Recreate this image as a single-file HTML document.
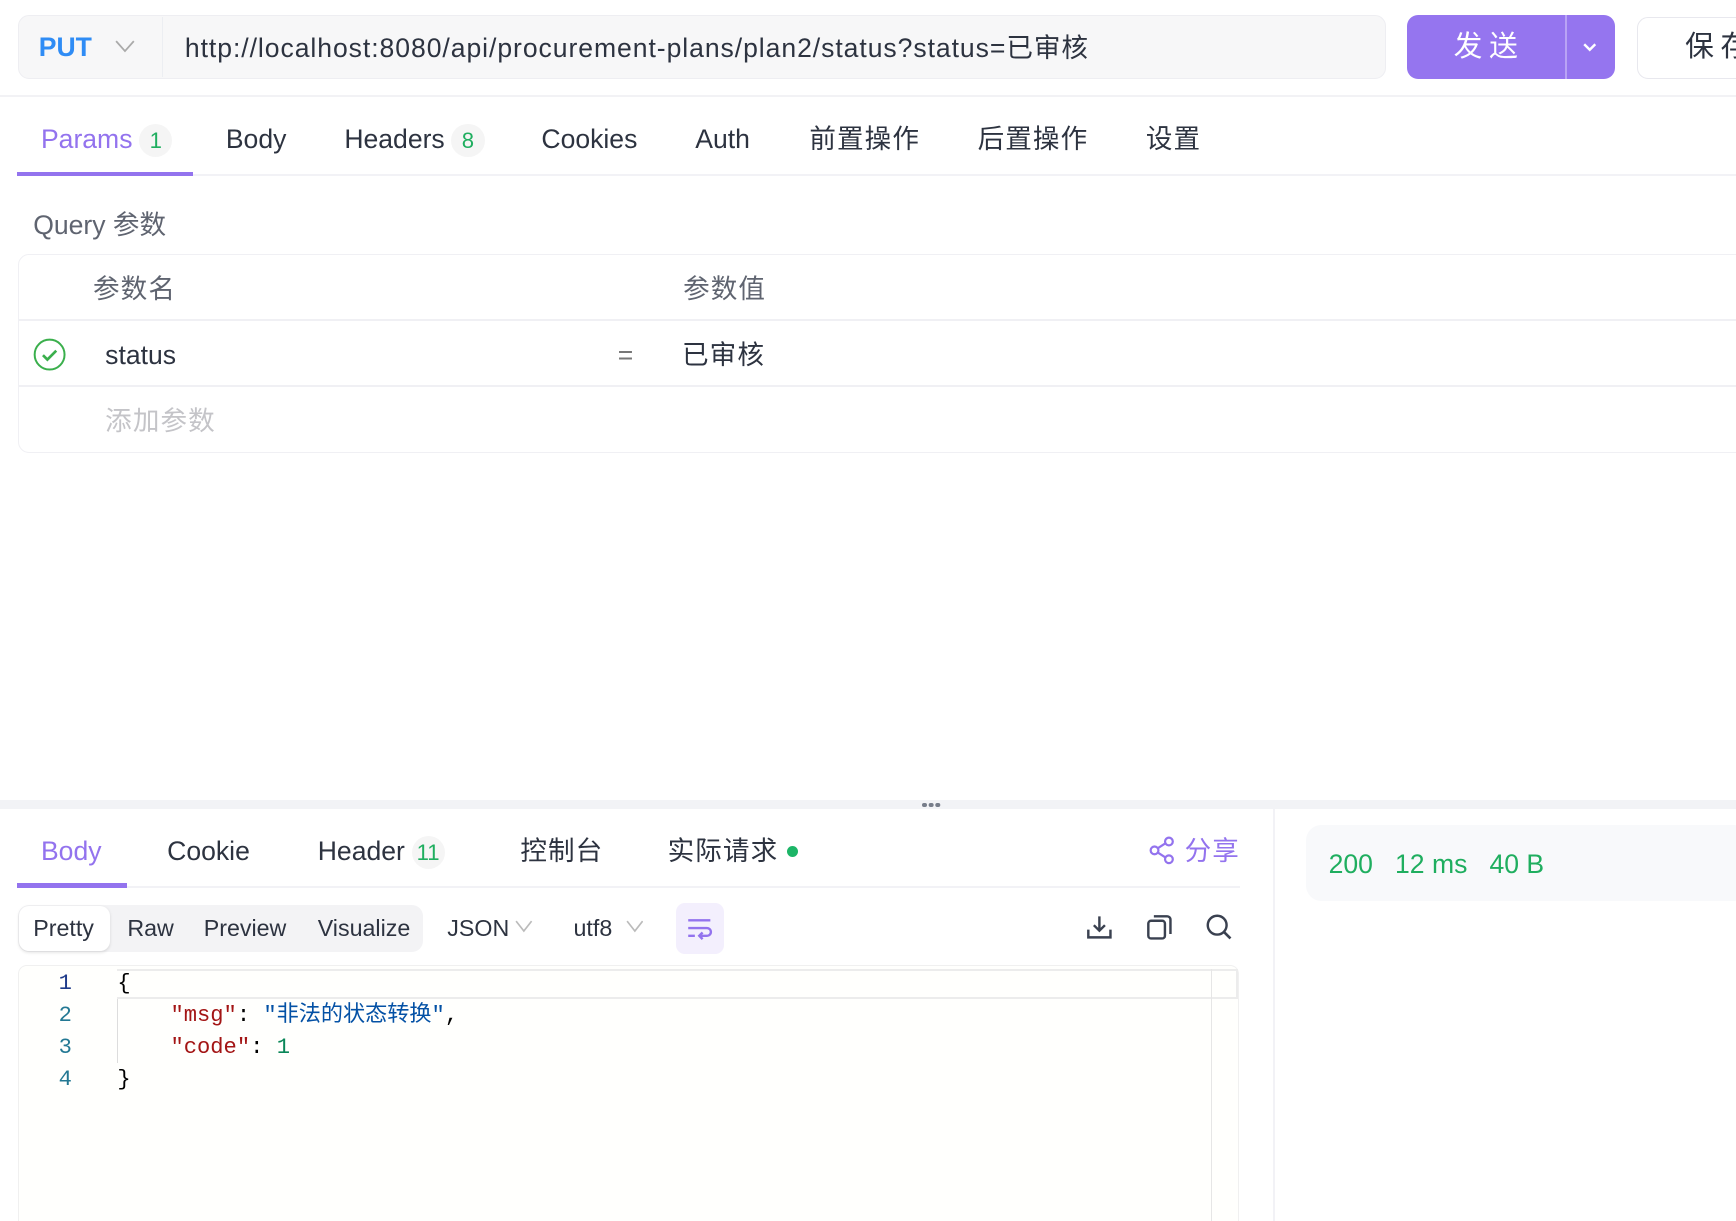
<!DOCTYPE html>
<html><head><meta charset="utf-8">
<style>
*{box-sizing:border-box;margin:0;padding:0}
html,body{width:1736px;height:1221px;overflow:hidden;background:#fff}
#root{zoom:1.10714;width:1568px;height:1103px;position:relative;font-family:"Liberation Sans","Noto Sans CJK SC",sans-serif;color:#2d3340;font-size:24px}
.a{position:absolute;white-space:nowrap}
.badge{display:inline-block;width:30px;height:30px;border-radius:15px;background:#f5f5f5;color:#1fae5f;font-size:20px;line-height:30px;text-align:center;margin-left:6px;vertical-align:middle}
.mono{font-family:"Liberation Mono","Noto Sans CJK SC",monospace;font-size:20px;white-space:pre}
</style></head><body><div id="root">
<div class="a" style="left:16px;top:14px;width:1236px;height:57px;background:#f7f7f8;border:1px solid #eeeef2;border-radius:10px"></div>
<div class="a" style="left:146px;top:15px;width:1px;height:55px;background:#eceef2"></div>
<div class="a" style="left:35px;top:28px;font-weight:bold;color:#2f8cf5;font-size:24px;line-height:30px">PUT</div>
<svg class="a" style="left:104px;top:36px" width="18" height="12" viewBox="0 0 18 12"><path d="M1 1l8 9 8-9" fill="none" stroke="#aaa" stroke-width="1.6"/></svg>
<div class="a" style="left:167px;top:29px;line-height:30px;color:#2d3340;letter-spacing:0.85px">http://localhost:8080/api/procurement-plans/plan2/status?status=已审核</div>
<div class="a" style="left:1271px;top:14px;width:188px;height:57px;background:#9575ef;border-radius:10px"></div>
<div class="a" style="left:1414px;top:14px;width:1px;height:57px;background:#b9a3f5"></div>
<div class="a" style="left:1313px;top:27px;color:#fff;font-size:26px;letter-spacing:6px;line-height:32px">发送</div>
<svg class="a" style="left:1429px;top:38px" width="14" height="9" viewBox="0 0 14 9"><path d="M2 2l5 5 5-5" fill="none" stroke="#fff" stroke-width="2.2"/></svg>
<div class="a" style="left:1479px;top:15px;width:120px;height:56px;border:1.5px solid #e8e8ee;border-radius:10px;background:#fff"></div>
<div class="a" style="left:1522px;top:27px;font-size:26px;letter-spacing:6px;line-height:32px">保存</div>
<div class="a" style="left:0;top:86px;width:1568px;height:2px;background:#f2f2f5"></div>
<div class="a" style="left:37px;top:110px;line-height:32px;color:#9373ee">Params<span class="badge">1</span></div>
<div class="a" style="left:204px;top:110px;line-height:32px">Body</div>
<div class="a" style="left:311px;top:110px;line-height:32px">Headers<span class="badge">8</span></div>
<div class="a" style="left:489px;top:110px;line-height:32px">Cookies</div>
<div class="a" style="left:628px;top:110px;line-height:32px">Auth</div>
<div class="a" style="left:731px;top:110px;line-height:32px;letter-spacing:1px">前置操作</div>
<div class="a" style="left:883px;top:110px;line-height:32px;letter-spacing:1px">后置操作</div>
<div class="a" style="left:1035px;top:110px;line-height:32px;letter-spacing:1px">设置</div>
<div class="a" style="left:15px;top:157px;width:1553px;height:2px;background:#f2f2f6"></div>
<div class="a" style="left:15px;top:155px;width:159px;height:4px;background:#9373ee"></div>
<div class="a" style="left:30px;top:188px;line-height:32px;color:#5f6470">Query 参数</div>
<div class="a" style="left:16px;top:229px;width:1570px;height:180px;border:1.5px solid #f0f0f4;border-radius:10px"></div>
<div class="a" style="left:17px;top:288px;width:1560px;height:1.5px;background:#f0f0f4"></div>
<div class="a" style="left:17px;top:348px;width:1560px;height:1.5px;background:#f0f0f4"></div>
<div class="a" style="left:84px;top:246px;line-height:32px;color:#5f6470;letter-spacing:1px">参数名</div>
<div class="a" style="left:617px;top:246px;line-height:32px;color:#5f6470;letter-spacing:1px">参数值</div>
<svg class="a" style="left:30px;top:305px" width="30" height="30" viewBox="0 0 30 30"><circle cx="15" cy="15" r="13.5" fill="none" stroke="#3aaf4c" stroke-width="1.8"/><path d="M9 15.5l4 4 8-8" fill="none" stroke="#3aaf4c" stroke-width="2.4"/></svg>
<div class="a" style="left:95px;top:305px;line-height:32px">status</div>
<div class="a" style="left:558px;top:305px;line-height:32px;color:#777">=</div>
<div class="a" style="left:616px;top:305px;line-height:32px;letter-spacing:1px">已审核</div>
<div class="a" style="left:95px;top:365px;line-height:32px;color:#c4c4c8;letter-spacing:1px">添加参数</div>
<div class="a" style="left:0;top:723px;width:1568px;height:8px;background:#f2f3f6"></div>
<div class="a" style="left:833px;top:725px;width:4px;height:4px;border-radius:2px;background:#777d8a;box-shadow:6px 0 #777d8a,12px 0 #777d8a"></div>
<div class="a" style="left:1150px;top:731px;width:2px;height:372px;background:#f2f2f6"></div>
<div class="a" style="left:37px;top:753px;line-height:32px;color:#9373ee">Body</div>
<div class="a" style="left:151px;top:753px;line-height:32px">Cookie</div>
<div class="a" style="left:287px;top:753px;line-height:32px">Header<span class="badge">11</span></div>
<div class="a" style="left:470px;top:753px;line-height:32px;letter-spacing:1px">控制台</div>
<div class="a" style="left:603px;top:753px;line-height:32px;letter-spacing:1px">实际请求</div>
<div class="a" style="left:711px;top:764px;width:10px;height:10px;border-radius:5px;background:#1cb567"></div>
<svg class="a" style="left:1038px;top:755px" width="24" height="26" viewBox="0 0 24 26"><circle cx="18" cy="5" r="3.5" fill="none" stroke="#9373ee" stroke-width="2"/><circle cx="5" cy="13" r="3.5" fill="none" stroke="#9373ee" stroke-width="2"/><circle cx="18" cy="21" r="3.5" fill="none" stroke="#9373ee" stroke-width="2"/><path d="M8 11l7-4.5M8 15l7 4.5" stroke="#9373ee" stroke-width="2"/></svg>
<div class="a" style="left:1070px;top:753px;line-height:32px;color:#9373ee;letter-spacing:1px">分享</div>
<div class="a" style="left:15px;top:800px;width:1105px;height:2px;background:#f2f2f6"></div>
<div class="a" style="left:15px;top:798px;width:100px;height:4px;background:#9373ee"></div>
<div class="a" style="left:16px;top:817px;width:366px;height:43px;background:#f3f3f5;border-radius:10px"></div>
<div class="a" style="left:17px;top:818px;width:82px;height:41px;background:#fff;border-radius:9px;box-shadow:0 1px 3px rgba(0,0,0,.12)"></div>
<div class="a" style="left:30px;top:825px;font-size:21px;line-height:28px">Pretty</div>
<div class="a" style="left:115px;top:825px;font-size:21px;line-height:28px">Raw</div>
<div class="a" style="left:184px;top:825px;font-size:21px;line-height:28px">Preview</div>
<div class="a" style="left:287px;top:825px;font-size:21px;line-height:28px">Visualize</div>
<div class="a" style="left:404px;top:825px;font-size:21px;line-height:28px">JSON</div>
<svg class="a" style="left:465px;top:831px" width="16" height="12" viewBox="0 0 16 12"><path d="M1 1l7 9 7-9" fill="none" stroke="#bbb" stroke-width="1.5"/></svg>
<div class="a" style="left:518px;top:825px;font-size:21px;line-height:28px">utf8</div>
<svg class="a" style="left:565px;top:831px" width="16" height="12" viewBox="0 0 16 12"><path d="M1 1l7 9 7-9" fill="none" stroke="#bbb" stroke-width="1.5"/></svg>
<div class="a" style="left:611px;top:816px;width:43px;height:46px;background:#f3effd;border-radius:8px"></div>
<svg class="a" style="left:620px;top:828px" width="24" height="22" viewBox="0 0 24 22"><path d="M2 3h20M2 10h17a3.5 3.5 0 010 7h-6M2 17h6" fill="none" stroke="#9373ee" stroke-width="2.2"/><path d="M15 14l-3 3 3 3" fill="none" stroke="#9373ee" stroke-width="2.2"/></svg>
<svg class="a" style="left:980px;top:825px" width="26" height="26" viewBox="0 0 26 26"><path d="M13 3v13M8 11l5 5 5-5M3 15v7h20v-7" fill="none" stroke="#3a4150" stroke-width="2.2"/></svg>
<svg class="a" style="left:1034px;top:825px" width="26" height="26" viewBox="0 0 26 26"><rect x="3" y="7" width="15" height="16" rx="2.5" fill="none" stroke="#3a4150" stroke-width="2.2"/><path d="M8 3h12a3 3 0 013 3v13" fill="none" stroke="#3a4150" stroke-width="2.2"/></svg>
<svg class="a" style="left:1088px;top:825px" width="26" height="26" viewBox="0 0 26 26"><circle cx="11" cy="11" r="8.5" fill="none" stroke="#3a4150" stroke-width="2.2"/><path d="M17 17l6 6" stroke="#3a4150" stroke-width="2.4"/></svg>
<div class="a" style="left:16px;top:872px;width:1103px;height:240px;border:1.5px solid #f0f0f0;border-bottom:none;border-radius:8px 8px 0 0;background:#fffffd"></div>
<div class="a" style="left:106px;top:875px;width:1012px;height:27px;border:2.5px solid #ececec;border-left:none"></div>
<div class="a" style="left:106px;top:902px;width:1px;height:58px;background:#ddd"></div>
<div class="a" style="left:1094px;top:875px;width:1px;height:228px;background:#e6e6e6"></div>
<div class="a mono" style="left:53px;top:874px;line-height:29px;color:#1f3b8a">1</div>
<div class="a mono" style="left:53px;top:903px;line-height:29px;color:#237893">2</div>
<div class="a mono" style="left:53px;top:932px;line-height:29px;color:#237893">3</div>
<div class="a mono" style="left:53px;top:961px;line-height:29px;color:#237893">4</div>
<div class="a mono" style="left:106px;top:874px;line-height:29px;color:#000">{</div>
<div class="a mono" style="left:106px;top:903px;line-height:29px;color:#000">    <span style="color:#a31515">"msg"</span>: <span style="color:#0451a5">"非法的状态转换"</span>,</div>
<div class="a mono" style="left:106px;top:932px;line-height:29px;color:#000">    <span style="color:#a31515">"code"</span>: <span style="color:#098658">1</span></div>
<div class="a mono" style="left:106px;top:961px;line-height:29px;color:#000">}</div>
<div class="a" style="left:1180px;top:745px;width:400px;height:69px;background:#f8f9fb;border-radius:14px"></div>
<div class="a" style="left:1200px;top:765px;line-height:32px;color:#1fae5f">200&nbsp;&nbsp;&nbsp;12 ms&nbsp;&nbsp;&nbsp;40 B</div>
</div></body></html>
